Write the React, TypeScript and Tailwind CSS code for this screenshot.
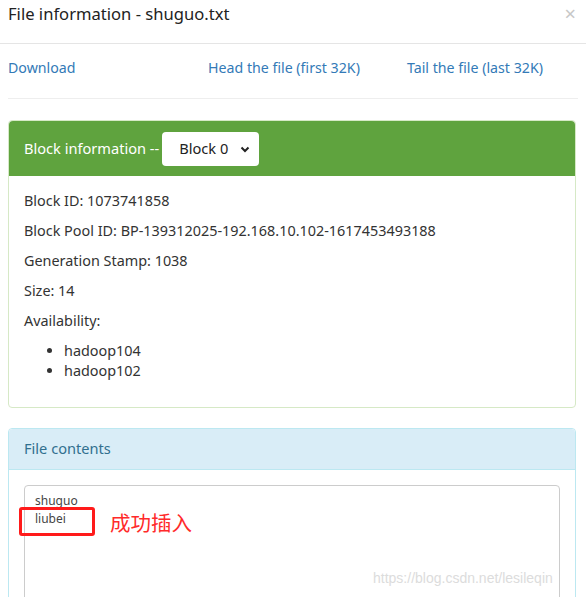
export default function App() {
  const font = { fontFamily: '"Noto Sans", "Open Sans", "Noto Sans CJK SC", sans-serif' };
  return (
    <div className="relative w-[586px] h-[597px] overflow-hidden bg-white text-[#333]" style={font}>
      {/* Modal header */}
      <div className="h-[44px] border-b border-[#e5e5e5] px-2 flex items-center justify-between">
        <h4 className="text-[16.6px] leading-none text-[#222] -mt-[14px]">File information - shuguo.txt</h4>
        <span className="text-[#c7c7c7] text-[20px] leading-none -mt-[16px] mr-[2px]">×</span>
      </div>

      <div className="px-2">
        {/* Links */}
        <div className="h-[55px] border-b border-[#eee] flex items-center pb-[6px] text-[14.2px] text-[#337ab7]">
          <a className="w-[200px]">Download</a>
          <a className="w-[199px]">Head the file (first 32K)</a>
          <a>Tail the file (last 32K)</a>
        </div>

        {/* Block panel */}
        <div className="mt-[21px] w-[568px] border border-[#d6e9c6] rounded">
          <div className="h-[55px] bg-[#5fa33e] rounded-t flex items-center px-[15px] text-white text-[14.6px]">
            <span>Block information --</span>
            <div className="ml-[3px] w-[97px] h-[34px] bg-white rounded-[4px] flex items-center justify-between pl-[17px] pr-[8px] text-[#222]">
              <span>Block 0</span>
              <svg width="12" height="12" viewBox="0 0 12 12">
                <path d="M2.5 4.5 L6 8 L9.5 4.5" fill="none" stroke="#222" strokeWidth="2" />
              </svg>
            </div>
          </div>
          <div className="px-[15px] pt-[15px] pb-[26px] text-[14.4px]">
            <div className="h-[30px] leading-[20px]">Block ID: 1073741858</div>
            <div className="h-[30px] leading-[20px]">Block Pool ID: BP-139312025-192.168.10.102-1617453493188</div>
            <div className="h-[30px] leading-[20px]">Generation Stamp: 1038</div>
            <div className="h-[30px] leading-[20px]">Size: 14</div>
            <div className="h-[30px] leading-[20px]">Availability:</div>
            <ul className="list-disc pl-[40px] leading-[20px]">
              <li>hadoop104</li>
              <li>hadoop102</li>
            </ul>
          </div>
        </div>

        {/* File contents panel */}
        <div className="mt-[20px] w-[568px] h-[200px] border border-[#bce8f1] rounded">
          <div className="h-[41px] bg-[#d9edf7] border-b border-[#bce8f1] rounded-t flex items-center px-[15px] text-[14.6px] text-[#31708f]">
            File contents
          </div>
          <div className="px-[15px] pt-[15px]">
            <div className="w-[536px] h-[150px] border border-[#ccc] rounded px-[10px] pt-[6px] text-[12px] leading-[18px] text-[#444]">
              <div>shuguo</div>
              <div>liubei</div>
            </div>
          </div>
        </div>
      </div>

      {/* Annotation */}
      <div className="absolute left-[19px] top-[507px] w-[76px] h-[29px] border-[3px] border-[#ff1a1a] rounded-[3px]" />
      <div className="absolute left-[110px] top-[509px] text-[20.5px] leading-[26px] text-[#ff2a2a]" style={{ fontFamily: '"Noto Sans CJK SC", sans-serif' }}>
        成功插入
      </div>
      <div className="absolute left-[373px] top-[568px] text-[14px] text-[#dcdcdc]" style={{ fontFamily: '"Liberation Sans", Arial, sans-serif' }}>
        https://blog.csdn.net/lesileqin
      </div>
    </div>
  );
}
